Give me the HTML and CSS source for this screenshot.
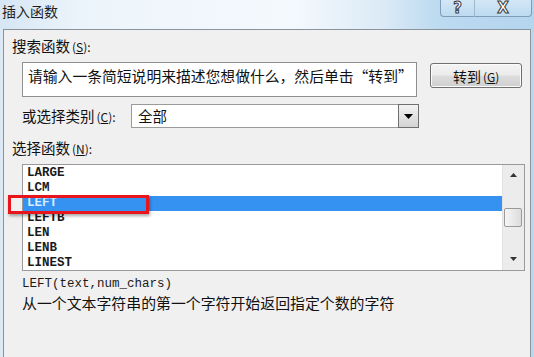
FILE: index.html
```html
<!DOCTYPE html>
<html lang="zh-CN">
  <head>
    <meta charset="UTF-8" />
    <title>插入函数</title>
    <link rel="stylesheet" href="styles.css">
  </head>
  <body>
    <div class="window">
      <!-- Title bar -->
      <div class="titlebar">
        <span class="title">插入函数</span>
        <div class="caption-buttons">
          <span class="cap-btn help">?</span>
          <span class="cap-btn close">X</span>
        </div>
      </div>

      <!-- Dialog body -->
      <div class="dialog">
        <div class="label">搜索函数<span class="key">(<u>S</u>):</span></div>
        <div class="search-row">
          <div class="search-box">请输入一条简短说明来描述您想做什么，然后单击“转到”</div>
          <button class="go-btn">转到<span class="key">(<u>G</u>)</span></button>
        </div>

        <div class="category-row">
          <span class="label cat-label">或选择类别<span class="key">(<u>C</u>):</span></span>
          <div class="select">
            <span class="select-value">全部</span>
            <span class="drop-btn">
              <svg width="9" height="5" viewBox="0 0 9 5"><path d="M0 0h9L4.5 5z" fill="#000"/></svg>
            </span>
          </div>
        </div>

        <div class="label func-label">选择函数<span class="key">(<u>N</u>):</span></div>
        <div class="listbox">
          <ul class="items">
            <li>LARGE</li>
            <li>LCM</li>
            <li class="selected">LEFT</li>
            <li>LEFTB</li>
            <li>LEN</li>
            <li>LENB</li>
            <li>LINEST</li>
          </ul>
          <div class="scrollbar">
            <svg class="arrow" width="7" height="4" viewBox="0 0 7 4"><path d="M0 4h7L3.5 0z" fill="#333"/></svg>
            <div class="thumb-track">
              <div class="thumb"></div>
            </div>
            <svg class="arrow" width="7" height="4" viewBox="0 0 7 4"><path d="M0 0h7L3.5 4z" fill="#333"/></svg>
          </div>
          <!-- red marker drawn over the selected row -->
          <div class="marker"></div>
        </div>

        <div class="syntax">LEFT(text,num_chars)</div>
        <div class="desc">从一个文本字符串的第一个字符开始返回指定个数的字符</div>
      </div>
    </div>
  </body>
</html>
```

FILE: styles.css
```css
/* Global Reset */
* {
  margin: 0;
  padding: 0;
  box-sizing: border-box;
}

body {
  width: 534px;
  height: 357px;
  overflow: hidden;
  font-family: "Noto Sans CJK SC", "Noto Sans", sans-serif;
  color: #111;
  background: linear-gradient(to right, #dce9f5 0%, #eaf3fb 30%, #e4f0f9 70%, #b8d8ee 100%);
}

.window {
  display: flex;
  flex-direction: column;
  height: 357px;
}

/* Title Bar */
.titlebar {
  height: 29px;
  display: flex;
  justify-content: space-between;
  align-items: flex-start;
  background: linear-gradient(to right, #d6e6f4 0%, #ecf4fb 15%, #f4f9fd 55%, #dbeaf6 72%, #bcdaf0 82%, #b4d5ee 100%);
}

.title {
  font-size: 14px;
  line-height: 22px;
  padding-left: 2px;
  color: #1e1e1e;
}

.caption-buttons {
  display: flex;
  margin-right: 2px;
  margin-top: -1px;
}

.cap-btn {
  height: 18px;
  display: flex;
  align-items: center;
  justify-content: center;
  font-family: "DejaVu Sans", sans-serif;
  font-weight: bold;
  font-size: 15px;
  color: #fff;
  -webkit-text-stroke: 1px #3a3a3a;
  border: 1px solid #7f9db9;
  background: linear-gradient(#d3e7f6, #bcdaf0);
}

.help {
  width: 35px;
  border-radius: 0 0 0 4px;
  border-right: 1px solid #9fb8cf;
}

.close {
  width: 57px;
  border-left: none;
  border-radius: 0 0 4px 0;
}

/* Dialog Body */
.dialog {
  flex: 1;
  margin: 0 3px 0 3px;
  background-color: #f0f0f0;
  border: 1px solid #8a939c;
  border-bottom: none;
  padding: 7px 8px 0 8px;
}

.label {
  font-size: 14.5px;
  line-height: 18px;
}

.key {
  font-size: 12px;
  margin-left: 2px;
}

/* Search Row */
.search-row {
  display: flex;
  align-items: flex-start;
  margin-top: 6px;
  margin-left: 10px;
}

.search-box {
  width: 397px;
  height: 35px;
  background: #fff;
  border: 1px solid #8e8f8f;
  font-size: 14.8px;
  line-height: 18px;
  padding: 4px 0 0 5px;
  white-space: nowrap;
  overflow: hidden;
}

.go-btn {
  width: 92px;
  height: 25px;
  margin-left: 13px;
  margin-top: 1px;
  font-family: "Noto Sans CJK SC", sans-serif;
  font-size: 14px;
  color: #111;
  border: 1px solid #707070;
  border-radius: 3px;
  background: linear-gradient(#f4f4f4 0%, #ebebeb 48%, #dddddd 52%, #cfcfcf 100%);
  box-shadow: inset 0 0 0 1px #fbfbfb;
}

/* Category Row */
.category-row {
  display: flex;
  align-items: center;
  margin-top: 7px;
  margin-left: 10px;
}

.cat-label {
  width: 109px;
}

.select {
  width: 288px;
  height: 24px;
  display: flex;
  justify-content: space-between;
  background: #fff;
  border: 1px solid #9a9a9a;
}

.select-value {
  font-size: 14.5px;
  line-height: 22px;
  padding-left: 6px;
}

.drop-btn {
  width: 21px;
  height: 24px;
  margin: -1px -1px 0 0;
  display: flex;
  align-items: center;
  justify-content: center;
  border: 1px solid #6f6f6f;
  background: linear-gradient(#f2f2f2, #d4d4d4);
}

.func-label {
  margin-top: 11px;
}

/* Function List */
.listbox {
  position: relative;
  display: flex;
  width: 503px;
  height: 107px;
  margin-top: 6px;
  margin-left: 10px;
  background: #fff;
  border: 1px solid #9a9a9a;
}

.items {
  flex: 1;
  list-style: none;
  padding-top: 1px;
}

.items li {
  height: 15px;
  line-height: 15px;
  padding-left: 4px;
  font-family: "Liberation Mono", monospace;
  font-size: 12.5px;
  font-weight: bold;
  color: #1a1a1a;
}

.items li.selected {
  background-color: #3592f0;
  color: #d8ecff;
}

.scrollbar {
  width: 22px;
  display: flex;
  flex-direction: column;
  align-items: center;
  justify-content: space-between;
  padding: 8px 0 9px;
  background: #ececec;
  border-left: 1px solid #e2e2e2;
}

.thumb-track {
  flex: 1;
  width: 100%;
  padding: 31px 0 0 1px;
}

.thumb {
  width: 18px;
  height: 19px;
  border: 1px solid #9a9a9a;
  border-radius: 2px;
  background: linear-gradient(to right, #f6f6f6, #dcdcdc);
}

.marker {
  position: absolute;
  left: -15px;
  top: 30px;
  width: 141px;
  height: 19px;
  border: 3px solid #e8161c;
  box-shadow: 1px 2px 3px rgba(0, 0, 0, 0.35);
}

/* Description */
.syntax {
  margin-top: 6px;
  margin-left: 10px;
  font-family: "Liberation Mono", monospace;
  font-size: 12.5px;
  line-height: 15px;
  color: #1a1a1a;
}

.desc {
  margin-left: 10px;
  margin-top: 2px;
  font-size: 14.9px;
  line-height: 18px;
}
```
